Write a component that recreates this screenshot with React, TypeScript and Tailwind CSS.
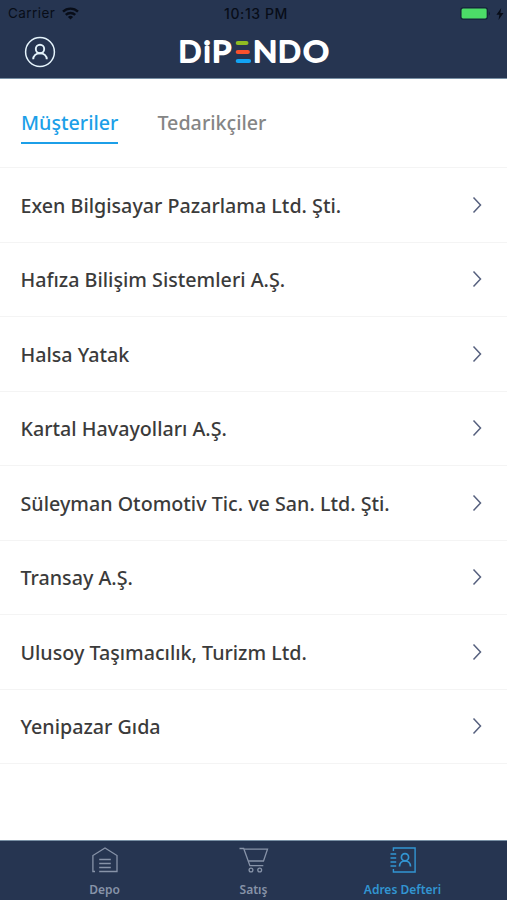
import { useState } from "react";

const musteriler = [
  "Exen Bilgisayar Pazarlama Ltd. Şti.",
  "Hafıza Bilişim Sistemleri A.Ş.",
  "Halsa Yatak",
  "Kartal Havayolları A.Ş.",
  "Süleyman Otomotiv Tic. ve San. Ltd. Şti.",
  "Transay A.Ş.",
  "Ulusoy Taşımacılık, Turizm Ltd.",
  "Yenipazar Gıda",
];

function StatusBar() {
  return (
    <div className="flex h-[27px] items-center justify-between pl-2 pr-[3px] font-['Inter','Liberation_Sans',sans-serif] text-[13.5px] text-[#080d18]">
      <div className="flex w-40 items-center gap-[7px]">
        <span className="tracking-[0.45px]">Carrier</span>
        <svg width="17" height="13" viewBox="0 0 17 13" fill="none" stroke="currentColor" strokeWidth="2.4">
          <path d="M1 4.7a10.8 10.8 0 0 1 15 0" />
          <path d="M3.8 7.9a6.8 6.8 0 0 1 9.4 0" />
          <path d="M8.5 12.6 5.9 10a3.7 3.7 0 0 1 5.2 0Z" fill="currentColor" stroke="none" />
        </svg>
      </div>
      <span className="text-[14px] font-medium tracking-[0.6px]">10:13 PM</span>
      <div className="flex w-40 items-center justify-end gap-[5px]">
        <svg width="31" height="13" viewBox="0 0 31 13">
          <rect x="0.9" y="0.9" width="26.4" height="11.2" rx="2" fill="#4cdc68" stroke="#142238" strokeWidth="1.3" />
          <path d="M28.8 4.5c1.5.6 1.5 3.4 0 4Z" fill="#142238" />
        </svg>
        <svg width="8" height="12" viewBox="0 0 8 12" fill="currentColor">
          <path d="M5.2 0 .4 6.7h3L2.5 12l5-7H4.4Z" />
        </svg>
      </div>
    </div>
  );
}

function Logo() {
  return (
    <svg
      width="156"
      height="44"
      viewBox="-2 -8 156 44"
      className="-my-2 font-['Lato','Open_Sans',sans-serif] text-[29.5px] font-normal"
    >
      <g fill="#fff" stroke="#fff" strokeWidth="1.9" strokeLinejoin="round">
        <text x="-0.6" y="24.2" textLength="22.8" lengthAdjust="spacingAndGlyphs">D</text>
        <text x="24.4" y="24.2">i</text>
        <text x="33.1" y="24.2" textLength="19.3" lengthAdjust="spacingAndGlyphs">P</text>
        <text x="74" y="24.2" textLength="24.3" lengthAdjust="spacingAndGlyphs">N</text>
        <text x="99" y="24.2" textLength="22.8" lengthAdjust="spacingAndGlyphs">D</text>
        <text x="123.9" y="24.2" textLength="26" lengthAdjust="spacingAndGlyphs">O</text>
      </g>
      <g strokeWidth="4.2" strokeLinecap="round">
        <path d="M58.8 5h8.6" stroke="#8fbc22" />
        <path d="M58.8 14h10" stroke="#fa512d" />
        <path d="M58.8 23h11.2" stroke="#12a4f5" />
      </g>
    </svg>
  );
}

function UserIcon() {
  return (
    <svg width="32" height="32" viewBox="0 0 32 32" fill="none" stroke="#e4f3fb" strokeWidth="1.5">
      <circle cx="16" cy="16" r="14.4" />
      <circle cx="16" cy="13" r="4.2" strokeWidth="1.9" />
      <path d="M9.2 23.3c0-3.6 3-6.1 6.8-6.1s6.8 2.5 6.8 6.1" strokeWidth="1.9" />
    </svg>
  );
}

function DepoIcon() {
  return (
    <svg width="28" height="28" viewBox="0 0 28 28" fill="none" stroke="currentColor" strokeWidth="1.3">
      <path d="M4 25.5H1.9V9.5L14 2l12 7.5v16H8.2" />
      <path d="M8.2 13.5h11.6M8.2 17.5h11.6M8.2 21.5h11.6" />
    </svg>
  );
}

function SatisIcon() {
  return (
    <svg width="30" height="28" viewBox="0 0 30 28" fill="none" stroke="currentColor" strokeWidth="1.3">
      <path d="M.5 2.5h4.2l6.2 17.1h13.4" />
      <path d="M5.2 3.2h23.3l-4 11.8H9.2" />
      <circle cx="12" cy="24" r="1.9" />
      <circle cx="20.7" cy="24" r="1.9" />
    </svg>
  );
}

function AdresIcon() {
  return (
    <svg width="28" height="28" viewBox="0 0 28 28" fill="none" stroke="currentColor" strokeWidth="1.4">
      <path d="M4.4 5V2h21.7v24H4.4v-3" />
      <path d="M1.5 8h5.7M1.5 12h5.7M1.5 16h5.7M1.5 20h5.7" />
      <circle cx="16" cy="11.2" r="3.6" strokeWidth="1.7" />
      <path d="M10.5 20.5c0-3.5 2.4-5.7 5.5-5.7s5.5 2.2 5.5 5.7" strokeWidth="1.7" />
    </svg>
  );
}

const menu = [
  { ad: "Depo", Icon: DepoIcon },
  { ad: "Satış", Icon: SatisIcon },
  { ad: "Adres Defteri", Icon: AdresIcon },
];

function App() {
  const [sekme, setSekme] = useState("Müşteriler");
  const [sayfa, setSayfa] = useState("Adres Defteri");

  return (
    <div className="flex h-[900px] w-[507px] flex-col overflow-hidden bg-white font-['Noto_Sans','Open_Sans',sans-serif]">
      <header className="h-[79px] shrink-0 border-b border-[#7890a5] bg-[#263551]">
        <StatusBar />
        <div className="flex items-center justify-between px-6 pt-[9px]">
          <button type="button" aria-label="Profil">
            <UserIcon />
          </button>
          <Logo />
          <div className="w-[30px]" />
        </div>
      </header>

      <div className="flex h-[89px] shrink-0 items-start gap-[39px] border-b border-[#f4f4f4] px-[21px] pt-[27px]">
        {["Müşteriler", "Tedarikçiler"].map((ad) => (
          <button
            key={ad}
            type="button"
            onClick={() => setSekme(ad)}
            className={
              sekme === ad
                ? "flex h-[38px] items-start border-b-2 border-[#1c9fe8] text-[19.7px] leading-[33px] font-medium text-[#1c9fe8]"
                : "flex h-[38px] items-start text-[19.7px] leading-[33px] font-medium text-[#858585]"
            }
          >
            {ad}
          </button>
        ))}
      </div>

      <main className="grow">
        {musteriler.map((ad) => (
          <div
            key={ad}
            className="flex h-[74.5px] items-center justify-between border-b border-[#f4f4f4] pl-[20.5px] pr-[25px]"
          >
            <span className="pt-[2px] text-[19.7px] font-medium text-[#3b3b3b]">{ad}</span>
            <svg width="10" height="18" viewBox="0 0 10 18" fill="none" stroke="#56607e" strokeWidth="1.5">
              <path d="m1.5 1.5 7 7.5-7 7.5" />
            </svg>
          </div>
        ))}
      </main>

      <nav className="flex h-[60px] shrink-0 justify-center border-t border-[#7890a5] bg-[#263551]">
        {menu.map(({ ad, Icon }) => (
          <button
            key={ad}
            type="button"
            onClick={() => setSayfa(ad)}
            className={
              sayfa === ad
                ? "flex w-[149px] flex-col items-center pt-[5px] text-[#3295d2]"
                : "flex w-[149px] flex-col items-center pt-[5px] text-[#8793a8]"
            }
          >
            <Icon />
            <span className="mt-[8px] text-[12px] leading-4 font-semibold">{ad}</span>
          </button>
        ))}
      </nav>
    </div>
  );
}

export default App;
